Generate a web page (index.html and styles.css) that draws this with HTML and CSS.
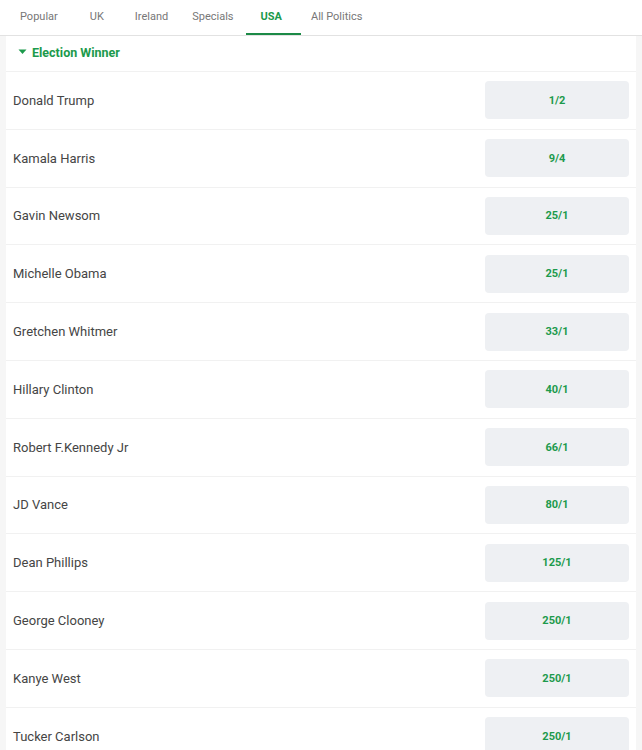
FILE: index.html
```html
<!DOCTYPE html>
<html>
<head>
<meta charset="utf-8">
<link rel="stylesheet" href="styles.css">
</head>
<body>
<nav class="tabs">
  <div class="tab">Popular</div>
  <div class="tab">UK</div>
  <div class="tab">Ireland</div>
  <div class="tab">Specials</div>
  <div class="tab active">USA</div>
  <div class="tab">All Politics</div>
</nav>
<main class="card">
  <div class="header">
    <svg class="caret" width="9" height="6" viewBox="0 0 9 6"><path d="M0.5 0.5 H8.5 L4.5 5 Z" fill="#1c9a4c"/></svg>
    <span>Election Winner</span>
  </div>
  <div class="row"><span class="name">Donald Trump</span><span class="odds">1/2</span></div>
  <div class="row"><span class="name">Kamala Harris</span><span class="odds">9/4</span></div>
  <div class="row"><span class="name">Gavin Newsom</span><span class="odds">25/1</span></div>
  <div class="row"><span class="name">Michelle Obama</span><span class="odds">25/1</span></div>
  <div class="row"><span class="name">Gretchen Whitmer</span><span class="odds">33/1</span></div>
  <div class="row"><span class="name">Hillary Clinton</span><span class="odds">40/1</span></div>
  <div class="row"><span class="name">Robert F.Kennedy Jr</span><span class="odds">66/1</span></div>
  <div class="row"><span class="name">JD Vance</span><span class="odds">80/1</span></div>
  <div class="row"><span class="name">Dean Phillips</span><span class="odds">125/1</span></div>
  <div class="row"><span class="name">George Clooney</span><span class="odds">250/1</span></div>
  <div class="row"><span class="name">Kanye West</span><span class="odds">250/1</span></div>
  <div class="row"><span class="name">Tucker Carlson</span><span class="odds">250/1</span></div>
</main>
</body>
</html>
```
FILE: styles.css
```css
html, body {
  margin: 0;
  padding: 0;
  background: #f6f6f6;
  font-family: Roboto, "Liberation Sans", sans-serif;
  overflow: hidden;
}
.tabs {
  display: flex;
  height: 36px;
  background: #fff;
  border-bottom: 1px solid #e2e2e2;
  padding-left: 20px;
  box-sizing: border-box;
}
.tab {
  height: 35px;
  line-height: 33px;
  font-size: 11px;
  color: #777;
  box-sizing: border-box;
  border-bottom: 2px solid transparent;
}
.tab:nth-child(2) { margin-left: 32px; }
.tab:nth-child(3) { margin-left: 31px; }
.tab:nth-child(4) { margin-left: 24px; }
.tab:nth-child(6) { margin-left: 10px; }
.tab.active {
  color: #1c9a4c;
  font-weight: 700;
  border-bottom-color: #1c8a46;
  padding: 0 19px 0 15px;
  margin-left: 12px;
}
.card {
  margin: 0 6px;
  background: #fff;
}
.header {
  height: 36px;
  display: flex;
  align-items: center;
  padding-left: 12px;
  padding-bottom: 3px;
  box-sizing: border-box;
  gap: 5px;
  color: #1c9a4c;
  font-weight: 700;
  font-size: 12.5px;
  border-bottom: 1px solid #f1f1f1;
}
.row {
  height: 56.8px;
  display: flex;
  align-items: center;
  justify-content: space-between;
  border-bottom: 1px solid #f1f1f1;
  padding: 0 7px 0 7px;
}
.name {
  font-size: 13px;
  color: #454545;
}
.odds {
  width: 144px;
  height: 38px;
  border-radius: 4px;
  background: #eef0f3;
  display: flex;
  align-items: center;
  justify-content: center;
  font-size: 11px;
  font-weight: 700;
  color: #1c9a4c;
}
```
